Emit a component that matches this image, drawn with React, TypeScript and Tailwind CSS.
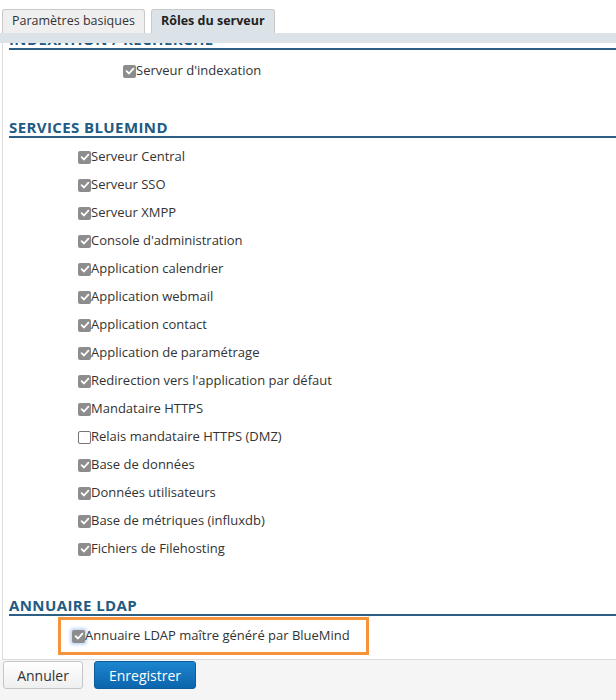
import React from 'react';

const services = [
  { label: 'Serveur Central', checked: true },
  { label: 'Serveur SSO', checked: true },
  { label: 'Serveur XMPP', checked: true },
  { label: "Console d'administration", checked: true },
  { label: 'Application calendrier', checked: true },
  { label: 'Application webmail', checked: true },
  { label: 'Application contact', checked: true },
  { label: 'Application de paramétrage', checked: true },
  { label: "Redirection vers l'application par défaut", checked: true },
  { label: 'Mandataire HTTPS', checked: true },
  { label: 'Relais mandataire HTTPS (DMZ)', checked: false },
  { label: 'Base de données', checked: true },
  { label: 'Données utilisateurs', checked: true },
  { label: 'Base de métriques (influxdb)', checked: true },
  { label: 'Fichiers de Filehosting', checked: true },
];

function Box({ checked, focus }: { checked: boolean; focus?: boolean }) {
  if (!checked) {
    return <span className="inline-block w-[13px] h-[13px] rounded-[2px] border border-[#76747a] bg-white shrink-0" />;
  }
  return (
    <span
      className={
        'inline-flex items-center justify-center w-[13px] h-[13px] rounded-[2px] bg-[#8d8d8d] shrink-0' +
        (focus ? ' shadow-[0_0_3px_2px_rgba(120,170,230,0.45)]' : '')
      }
    >
      <svg width="10" height="10" viewBox="0 0 10 10">
        <path d="M1.6 5.2 L4 7.5 L8.4 2.6" fill="none" stroke="#fff" strokeWidth="1.8" strokeLinecap="round" strokeLinejoin="round" />
      </svg>
    </span>
  );
}

function Heading({ children }: { children: React.ReactNode }) {
  return (
    <div className="ml-[6px] h-[20px] border-b-2 border-[#2b5f84]">
      <h2 className="text-[15px] font-bold text-[#215b82] leading-[18px] tracking-[0.4px] whitespace-nowrap">{children}</h2>
    </div>
  );
}

export default function App() {
  return (
    <div className="w-[616px] h-[700px] bg-white overflow-hidden text-[#333] font-['Open_Sans',sans-serif] text-[13px]">
      <div className="flex items-end pl-[2px] pt-[9px] gap-[6px]">
        <div className="h-[24px] px-[9px] flex items-center border border-b-0 border-[#c9c9c9] rounded-t-[3px] bg-[#efefef] text-[12.5px] text-[#333]">
          Paramètres basiques
        </div>
        <div className="h-[24px] px-[9px] flex items-center border border-b-0 border-[#c9c9c9] rounded-t-[3px] bg-[#dbe2e8] text-[12.5px] font-bold text-[#222]">
          Rôles du serveur
        </div>
      </div>
      <div className="h-[10px] bg-[#dbe2e8]" />
      <div className="h-[617px] overflow-hidden border-l border-b border-[#dcdcdc] ml-[2px]">
        <div className="-mt-[13px]">
          <Heading>INDEXATION / RECHERCHE</Heading>
          <div className="pl-[120px] pt-[13px]">
            <label className="flex items-center h-[16px]">
              <Box checked />
              <span>Serveur d'indexation</span>
            </label>
          </div>
          <div className="mt-[39px]">
            <Heading>SERVICES BLUEMIND</Heading>
          </div>
          <div className="pl-[75px] pt-[11px] flex flex-col gap-[12px]">
            {services.map((s) => (
              <label key={s.label} className="flex items-center h-[16px]">
                <Box checked={s.checked} />
                <span>{s.label}</span>
              </label>
            ))}
          </div>
          <div className="mt-[39px]">
            <Heading>ANNUAIRE LDAP</Heading>
          </div>
          <div className="ml-[55px] mt-[1px] w-[311px] h-[38px] border-[3px] border-[#f5923a] flex items-center pl-[11px]">
            <label className="flex items-center">
              <Box checked focus />
              <span>Annuaire LDAP maître généré par BlueMind</span>
            </label>
          </div>
        </div>
      </div>
      <div className="bg-[#f5f5f5] h-[40px] flex items-start pt-[1px] pl-[3px] gap-[11px]">
        <button className="h-[28px] w-[80px] rounded-[3px] border border-[#c6c6c6] bg-gradient-to-b from-white to-[#efefef] text-[14px] text-[#333]">
          Annuler
        </button>
        <button className="h-[28px] w-[102px] rounded-[3px] border border-[#0c5d9c] bg-gradient-to-b from-[#1d85d0] to-[#0b65ac] text-[14px] text-white">
          Enregistrer
        </button>
      </div>
    </div>
  );
}
